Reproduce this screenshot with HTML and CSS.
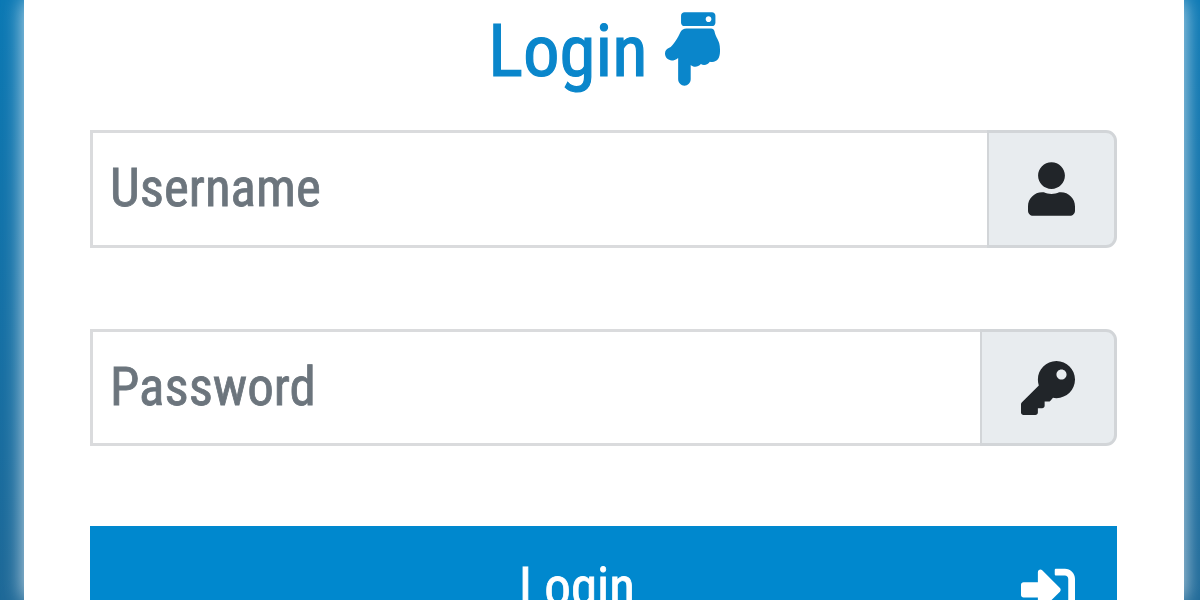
FILE: index.html
```html
<!DOCTYPE html>
<html lang="en">
<head>
    <meta charset="UTF-8">
    <meta name="viewport" content="width=device-width, initial-scale=1.0">
    <title>Login</title>
    <link rel="stylesheet" href="styles.css">
</head>
<body>
<div class="login-card">
    <h1 class="login-title">
        <span>Login</span>
        <svg class="icon-hand" viewBox="0 0 384 512"><path d="M91.826 467.2V317.966c-8.248 5.841-16.558 10.57-24.918 14.153C35.098 345.752-.014 322.222 0 288c.008-18.616 10.897-32.203 29.092-40 28.286-12.122 64.329-78.648 77.323-107.534 7.956-17.857 25.479-28.453 43.845-28.464l.001-.002h171.526c11.812 0 21.897 8.596 23.703 20.269 7.25 46.837 38.483 61.76 38.315 123.731-.007 2.724.195 13.254.195 16 0 50.654-22.122 81.574-71.263 72.6-9.297 18.597-39.486 30.738-62.315 16.45-21.177 24.645-53.896 22.639-70.944 6.299V467.2c0 24.15-20.201 44.8-43.826 44.8-23.283 0-43.826-21.35-43.826-44.8zM112 72V24c0-13.255 10.745-24 24-24h192c13.255 0 24 10.745 24 24v48c0 13.255-10.745 24-24 24H136c-13.255 0-24-10.745-24-24zm212-24c0-11.046-8.954-20-20-20s-20 8.954-20 20 8.954 20 20 20 20-8.954 20-20z"/></svg>
    </h1>
    <form>
        <div class="input-group user-group">
            <input type="text" class="form-control" placeholder="Username">
            <span class="input-group-text">
                <svg class="icon-user" viewBox="0 0 448 512"><path d="M224 256c70.7 0 128-57.3 128-128S294.7 0 224 0 96 57.3 96 128s57.3 128 128 128zm89.6 32h-16.7c-22.2 10.2-46.9 16-72.9 16s-50.6-5.8-72.9-16h-16.7C60.2 288 0 348.2 0 422.4V464c0 26.5 21.5 48 48 48h352c26.5 0 48-21.5 48-48v-41.6c0-74.2-60.2-134.4-134.4-134.4z"/></svg>
            </span>
        </div>
        <div class="input-group password-group">
            <input type="password" class="form-control" placeholder="Password">
            <span class="input-group-text">
                <svg class="icon" viewBox="0 0 512 512"><path d="M512 176.001C512 273.203 433.202 352 336 352c-11.22 0-22.19-1.062-32.827-3.069l-24.012 27.014A23.999 23.999 0 0 1 261.223 384H224v40c0 13.255-10.745 24-24 24h-40v40c0 13.255-10.745 24-24 24H24c-13.255 0-24-10.745-24-24v-78.059c0-6.365 2.529-12.47 7.029-16.971l161.802-161.802C163.108 213.814 160 195.271 160 176 160 78.798 238.797.001 335.999 0 433.488-.001 512 78.511 512 176.001zM336 128c0 26.51 21.49 48 48 48s48-21.49 48-48-21.49-48-48-48-48 21.49-48 48z"/></svg>
            </span>
        </div>
        <button type="button" class="login-button">
            <span class="login-label">Login</span>
            <svg class="icon" viewBox="0 0 512 512"><path d="M416 448h-84c-6.6 0-12-5.4-12-12v-40c0-6.6 5.4-12 12-12h84c17.7 0 32-14.3 32-32V160c0-17.7-14.3-32-32-32h-84c-6.6 0-12-5.4-12-12V76c0-6.6 5.4-12 12-12h84c53 0 96 43 96 96v192c0 53-43 96-96 96zm-47-201L201 79c-15-15-41-4.5-41 17v96H24c-13.3 0-24 10.7-24 24v96c0 13.3 10.7 24 24 24h136v96c0 21.5 26 32 41 17l168-168c9.3-9.4 9.3-24.6 0-34z"/></svg>
        </button>
    </form>
</div>
</body>
</html>
```
FILE: styles.css
```css
* {
    box-sizing: border-box;
}

body {
    margin: 0;
    height: 600px;
    padding: 0 16px 0 24px;
    overflow: hidden;
    background: linear-gradient(#0a78b4, #1d6897);
    font-family: "Roboto Condensed", Roboto, sans-serif;
    font-stretch: 75%;
    -webkit-text-stroke: 0.8px;
}

svg {
    display: block;
    fill: currentColor;
    flex-shrink: 0;
}

.login-card {
    height: 600px;
    padding: 12px 67px 0 66px;
    background-color: #fff;
    box-shadow: 0 0 20px rgba(255, 255, 255, 0.8);
}

.login-title {
    display: flex;
    justify-content: center;
    gap: 17px;
    height: 118px;
    margin: 0;
    padding-left: 1px;
    color: #0a86cb;
    font-size: 73px;
    font-weight: 400;
    line-height: 78px;
    -webkit-text-stroke: 1.2px;
}

.icon-hand {
    width: 55px;
    height: 74px;
}

.input-group {
    display: flex;
}

.user-group {
    height: 118px;
    margin-bottom: 81px;
}

.password-group {
    height: 117px;
    margin-bottom: 80px;
}

.form-control {
    flex: 1;
    min-width: 0;
    padding: 0 17px 3px;
    border: 3px solid #dadbdd;
    border-right: 0;
    border-radius: 0;
    outline: none;
    background-color: #fff;
    font: inherit;
    font-size: 53px;
}

.password-group .form-control {
    padding-bottom: 1px;
}

.form-control::placeholder {
    color: #6c757d;
    opacity: 1;
}

.input-group-text {
    display: flex;
    align-items: center;
    padding: 0 39px;
    border: 3px solid #d2d5d8;
    border-left-width: 2px;
    border-radius: 0 11px 11px 0;
    background-color: #e8ecef;
    color: #212529;
}

.icon {
    width: 54px;
    height: 54px;
}

.icon-user {
    width: 47px;
    height: 54px;
}

.login-button {
    display: flex;
    align-items: center;
    width: 100%;
    height: 126px;
    padding: 0 42px;
    border: 0;
    background-color: #0088ce;
    color: #fff;
    font: inherit;
    font-size: 53px;
}

.login-label {
    flex: 1;
    padding: 0 0 4px 1px;
}
```
